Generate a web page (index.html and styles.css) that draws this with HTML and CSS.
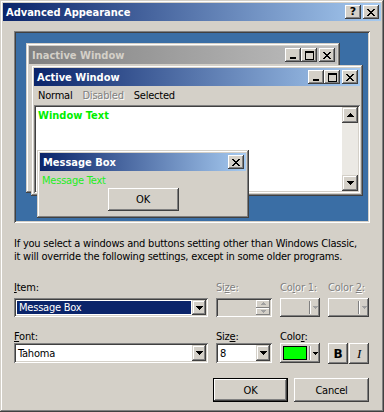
FILE: index.html
```html
<!DOCTYPE html>
<html lang="en">
<head>
    <meta charset="UTF-8">
    <title>Advanced Appearance</title>
    <link rel="stylesheet" href="styles.css">
</head>
<body>
    <div class="dialog">
        <div class="titlebar">
            <span class="title">Advanced Appearance</span>
            <div class="caption-btns">
                <span class="cbtn help">?</span>
                <span class="cbtn sep">
                    <svg width="8" height="7" viewBox="0 0 8 7"><path d="M0 0h2v1H0zM6 0h2v1H6zM1 1h2v1H1zM5 1h2v1H5zM2 2h4v1H2zM3 3h2v1H3zM2 4h4v1H2zM1 5h2v1H1zM5 5h2v1H5zM0 6h2v1H0zM6 6h2v1H6z"/></svg>
                </span>
            </div>
        </div>

        <div class="content">
            <!-- preview of the scheme -->
            <div class="preview">
                <div class="win inactive-win">
                    <div class="titlebar inactive">
                        <span class="title">Inactive Window</span>
                        <div class="caption-btns">
                            <span class="cbtn"><svg width="8" height="7" viewBox="0 0 8 7"><path d="M1 5h6v2H1z"/></svg></span>
                            <span class="cbtn"><svg width="9" height="9" viewBox="0 0 9 9"><path fill-rule="evenodd" d="M0 0h9v9H0zM1 2v6h7V2z"/></svg></span>
                            <span class="cbtn sep"><svg width="8" height="7" viewBox="0 0 8 7"><path d="M0 0h2v1H0zM6 0h2v1H6zM1 1h2v1H1zM5 1h2v1H5zM2 2h4v1H2zM3 3h2v1H3zM2 4h4v1H2zM1 5h2v1H1zM5 5h2v1H5zM0 6h2v1H0zM6 6h2v1H6z"/></svg></span>
                        </div>
                    </div>
                </div>

                <div class="win active-win">
                    <div class="titlebar">
                        <span class="title">Active Window</span>
                        <div class="caption-btns">
                            <span class="cbtn"><svg width="8" height="7" viewBox="0 0 8 7"><path d="M1 5h6v2H1z"/></svg></span>
                            <span class="cbtn"><svg width="9" height="9" viewBox="0 0 9 9"><path fill-rule="evenodd" d="M0 0h9v9H0zM1 2v6h7V2z"/></svg></span>
                            <span class="cbtn sep"><svg width="8" height="7" viewBox="0 0 8 7"><path d="M0 0h2v1H0zM6 0h2v1H6zM1 1h2v1H1zM5 1h2v1H5zM2 2h4v1H2zM3 3h2v1H3zM2 4h4v1H2zM1 5h2v1H1zM5 5h2v1H5zM0 6h2v1H0zM6 6h2v1H6z"/></svg></span>
                        </div>
                    </div>
                    <div class="menubar">
                        <span class="menu-item">Normal</span>
                        <span class="menu-item disabled">Disabled</span>
                        <span class="menu-item">Selected</span>
                    </div>
                    <div class="client">
                        <div class="window-text">Window Text</div>
                        <div class="scrollbar">
                            <span class="sbtn"><svg width="7" height="4" viewBox="0 0 7 4"><path d="M3 0h1v1h1v1h1v1h1v1H0V3h1V2h1V1h1z"/></svg></span>
                            <span class="track"></span>
                            <span class="sbtn"><svg width="7" height="4" viewBox="0 0 7 4"><path d="M0 0h7v1H6v1H5v1H4v1H3V3H2V2H1V1H0z"/></svg></span>
                        </div>
                    </div>
                </div>

                <div class="win msgbox">
                    <div class="titlebar">
                        <span class="title">Message Box</span>
                        <div class="caption-btns">
                            <span class="cbtn"><svg width="8" height="7" viewBox="0 0 8 7"><path d="M0 0h2v1H0zM6 0h2v1H6zM1 1h2v1H1zM5 1h2v1H5zM2 2h4v1H2zM3 3h2v1H3zM2 4h4v1H2zM1 5h2v1H1zM5 5h2v1H5zM0 6h2v1H0zM6 6h2v1H6z"/></svg></span>
                        </div>
                    </div>
                    <div class="msg-body">
                        <div class="msg-text">Message Text</div>
                        <button class="btn msg-ok">OK</button>
                    </div>
                </div>
            </div>

            <p class="note">If you select a windows and buttons setting other than Windows Classic,<br>it will override the following settings, except in some older programs.</p>

            <div class="settings row-item">
                <label class="lbl"><u>I</u>tem:</label>
                <label class="lbl off">Si<u>z</u>e:</label>
                <label class="lbl off">Co<u>l</u>or 1:</label>
                <label class="lbl off">Color <u>2</u>:</label>

                <div class="field combo">
                    <span class="combo-text picked">Message Box</span>
                    <span class="drop"><svg width="7" height="4" viewBox="0 0 7 4"><path d="M0 0h7v1H6v1H5v1H4v1H3V3H2V2H1V1H0z"/></svg></span>
                </div>
                <div class="field spin off">
                    <span class="combo-text"></span>
                    <span class="spin-btns">
                        <span class="spin-btn"><svg width="5" height="3" viewBox="0 0 5 3"><path d="M2 0h1v1h1v1h1v1H0V2h1V1h1z"/></svg></span>
                        <span class="spin-btn"><svg width="5" height="3" viewBox="0 0 5 3"><path d="M0 0h5v1H4v1H3v1H2V2H1V1H0z"/></svg></span>
                    </span>
                </div>
                <div class="color-btn off">
                    <span class="swatch-area"></span>
                    <span class="color-arrow"><svg width="5" height="3" viewBox="0 0 5 3"><path d="M0 0h5v1H4v1H3v1H2V2H1V1H0z"/></svg></span>
                </div>
                <div class="color-btn off">
                    <span class="swatch-area"></span>
                    <span class="color-arrow"><svg width="5" height="3" viewBox="0 0 5 3"><path d="M0 0h5v1H4v1H3v1H2V2H1V1H0z"/></svg></span>
                </div>
            </div>

            <div class="settings row-font">
                <label class="lbl"><u>F</u>ont:</label>
                <label class="lbl">Siz<u>e</u>:</label>
                <label class="lbl">Colo<u>r</u>:</label>
                <span></span>

                <div class="field combo">
                    <span class="combo-text">Tahoma</span>
                    <span class="drop"><svg width="7" height="4" viewBox="0 0 7 4"><path d="M0 0h7v1H6v1H5v1H4v1H3V3H2V2H1V1H0z"/></svg></span>
                </div>
                <div class="field combo">
                    <span class="combo-text">8</span>
                    <span class="drop"><svg width="7" height="4" viewBox="0 0 7 4"><path d="M0 0h7v1H6v1H5v1H4v1H3V3H2V2H1V1H0z"/></svg></span>
                </div>
                <div class="color-btn">
                    <span class="swatch-area"><span class="swatch"></span></span>
                    <span class="color-arrow"><svg width="5" height="3" viewBox="0 0 5 3"><path d="M0 0h5v1H4v1H3v1H2V2H1V1H0z"/></svg></span>
                </div>
                <div class="style-btns">
                    <button class="btn style bold">B</button>
                    <button class="btn style italic">I</button>
                </div>
            </div>

            <div class="actions">
                <button class="btn default">OK</button>
                <button class="btn">Cancel</button>
            </div>
        </div>
    </div>
</body>
</html>
```

FILE: styles.css
```css
* {
    margin: 0;
    padding: 0;
    box-sizing: border-box;
}

body {
    font-family: "DejaVu Sans Condensed", "DejaVu Sans", sans-serif;
    font-size: 11px;
    letter-spacing: -0.22px;
    color: #000;
    background-color: #d4d0c8;
}

svg {
    display: block;
    shape-rendering: crispEdges;
}

/* classic raised frame */
.dialog,
.win {
    background-color: #d4d0c8;
    padding: 3px;
    box-shadow: inset -1px -1px #404040, inset 1px 1px #d4d0c8,
                inset -2px -2px #808080, inset 2px 2px #fff;
}

.dialog {
    width: 384px;
    height: 412px;
}

.titlebar {
    height: 18px;
    display: flex;
    align-items: center;
    justify-content: space-between;
    padding: 0 2px 0 3px;
    background: linear-gradient(to right, #0a246a, #a6caf0);
    color: #fff;
    font-weight: bold;
    letter-spacing: 0;
    white-space: nowrap;
}

.titlebar.inactive {
    background: linear-gradient(to right, #808080, #c0c0c0);
    color: #d4d0c8;
}

.caption-btns {
    display: flex;
}

.cbtn {
    width: 16px;
    height: 14px;
    display: flex;
    align-items: center;
    justify-content: center;
    background-color: #d4d0c8;
    color: #000;
    box-shadow: inset -1px -1px #404040, inset 1px 1px #fff,
                inset -2px -2px #808080, inset 2px 2px #d4d0c8;
}

.cbtn.sep {
    margin-left: 2px;
}

.cbtn.help {
    font-family: "DejaVu Sans", sans-serif;
    font-size: 11px;
    font-weight: bold;
    line-height: 14px;
}

.content {
    padding: 10px 11px 0;
}

/* preview panel */
.preview {
    position: relative;
    height: 192px;
    background-color: #3a6ea5;
    box-shadow: inset 1px 1px #808080, inset -1px -1px #fff,
                inset 2px 2px #404040, inset -2px -2px #d4d0c8;
}

.win {
    position: absolute;
    display: flex;
    flex-direction: column;
}

.inactive-win {
    left: 12px;
    top: 12px;
    width: 314px;
    height: 150px;
}

.active-win {
    left: 17px;
    top: 34px;
    width: 332px;
    height: 131px;
}

.msgbox {
    left: 23px;
    top: 119px;
    width: 212px;
    height: 68px;
}

.menubar {
    height: 19px;
    display: flex;
    align-items: center;
}

.menu-item {
    padding: 0 4px;
    margin-right: 2px;
}

.menu-item.disabled {
    color: #808080;
    text-shadow: 1px 1px #fff;
}

.client {
    flex: 1;
    display: flex;
    background-color: #fff;
    padding: 2px;
    box-shadow: inset 1px 1px #808080, inset -1px -1px #fff,
                inset 2px 2px #404040, inset -2px -2px #d4d0c8;
}

.window-text {
    flex: 1;
    padding: 2px 0 0 2px;
    color: #00ee00;
    font-weight: bold;
    letter-spacing: 0;
}

.scrollbar {
    width: 16px;
    display: flex;
    flex-direction: column;
}

.sbtn {
    height: 16px;
    display: flex;
    align-items: center;
    justify-content: center;
    background-color: #d4d0c8;
    box-shadow: inset -1px -1px #404040, inset 1px 1px #d4d0c8,
                inset -2px -2px #808080, inset 2px 2px #fff;
}

.track {
    flex: 1;
    background-color: #ebe9e4;
}

.msg-body {
    flex: 1;
    display: flex;
    flex-direction: column;
    align-items: center;
    padding-top: 3px;
}

.msg-text {
    align-self: flex-start;
    padding-left: 2px;
    line-height: 13px;
    color: #22ee22;
}

.msg-ok {
    margin-top: 1px;
    width: 71px;
}

/* settings */
.note {
    margin-top: 14px;
    line-height: 13px;
    white-space: nowrap;
}

.settings {
    display: grid;
    grid-template-columns: 194px 56px 40px 41px;
    column-gap: 8px;
}

.row-item {
    margin-top: 18px;
    row-gap: 4px;
}

.row-font {
    margin-top: 13px;
    row-gap: 0;
}

.lbl {
    line-height: 13px;
    white-space: nowrap;
}

.lbl.off {
    color: #808080;
    text-shadow: 1px 1px #fff;
}

.field {
    height: 19px;
    display: flex;
    align-items: stretch;
    padding: 2px;
    background-color: #fff;
    box-shadow: inset 1px 1px #808080, inset -1px -1px #fff,
                inset 2px 2px #404040, inset -2px -2px #d4d0c8;
}

.row-font .field {
    height: 20px;
}

.field.off {
    background-color: #d4d0c8;
}

.combo-text {
    flex: 1;
    display: flex;
    align-items: center;
    padding-left: 2px;
    white-space: nowrap;
}

.combo-text.picked {
    margin: 1px;
    background-color: #0a246a;
    color: #fff;
}

.drop {
    width: 14px;
    display: flex;
    align-items: center;
    justify-content: center;
    background-color: #d4d0c8;
    box-shadow: inset -1px -1px #404040, inset 1px 1px #d4d0c8,
                inset -2px -2px #808080, inset 2px 2px #fff;
}

.spin-btns {
    width: 14px;
    display: flex;
    flex-direction: column;
}

.spin-btn {
    flex: 1;
    display: flex;
    align-items: center;
    justify-content: center;
    fill: #a0a0a0;
    box-shadow: inset -1px -1px #808080, inset 1px 1px #fff;
}

.color-btn {
    height: 19px;
    display: flex;
    align-items: center;
    padding: 3px 2px 3px 3px;
    background-color: #d4d0c8;
    box-shadow: inset -1px -1px #404040, inset 1px 1px #fff,
                inset -2px -2px #808080, inset 2px 2px #d4d0c8;
}

.row-font .color-btn {
    height: 20px;
}

.swatch-area {
    flex: 1;
    height: 100%;
    border-right: 1px solid #808080;
    box-shadow: 1px 0 #fff;
    margin-right: 2px;
}

.swatch {
    display: block;
    width: 24px;
    height: 14px;
    background-color: #00ff00;
    border: 1px solid #000;
}

.color-arrow {
    width: 6px;
    display: flex;
    justify-content: center;
}

.color-btn.off .color-arrow {
    fill: #a0a0a0;
}

.style-btns {
    display: flex;
    gap: 1px;
}

.btn {
    height: 23px;
    font-family: inherit;
    font-size: 11px;
    letter-spacing: inherit;
    color: #000;
    background-color: #d4d0c8;
    border: none;
    box-shadow: inset -1px -1px #404040, inset 1px 1px #fff,
                inset -2px -2px #808080, inset 2px 2px #d4d0c8;
}

.btn.style {
    width: 20px;
    height: 21px;
}

.btn.bold {
    font-family: "DejaVu Sans", sans-serif;
    font-weight: bold;
    font-size: 12px;
}

.btn.italic {
    font-family: "Liberation Serif", serif;
    font-style: italic;
    font-size: 13px;
}

.actions {
    display: flex;
    justify-content: flex-end;
    gap: 6px;
    margin-top: 14px;
    padding-right: 1px;
}

.actions .btn {
    width: 75px;
    height: 24px;
}

.btn.default {
    border: 1px solid #000;
    box-shadow: inset -1px -1px #404040, inset 1px 1px #fff,
                inset -2px -2px #808080, inset 2px 2px #d4d0c8;
}
```
